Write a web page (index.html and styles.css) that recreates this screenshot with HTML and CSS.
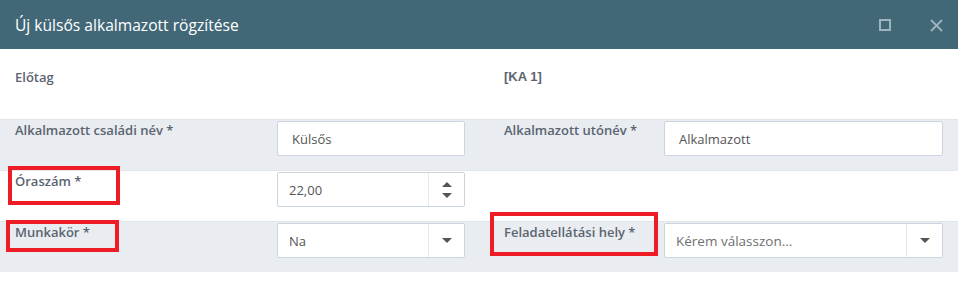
FILE: index.html
```html
<!DOCTYPE html>
<html lang="hu">
<head>
<meta charset="utf-8">
<link rel="stylesheet" href="styles.css">
</head>
<body>
<div class="modal">
  <div class="header">
    <h1 class="title">Új külsős alkalmazott rögzítése</h1>
    <div class="tools">
      <svg class="ico" width="12" height="12" viewBox="0 0 12 12"><rect x="1" y="1" width="10" height="10" fill="none" stroke="#9db3bf" stroke-width="2"/></svg>
      <svg class="ico" width="13" height="13" viewBox="0 0 13 13"><path d="M1 1L12 12M12 1L1 12" stroke="#9db3bf" stroke-width="1.8" fill="none"/></svg>
    </div>
  </div>
  <div class="body">
    <div class="row white">
      <div class="lbl">Előtag</div>
      <div></div>
      <div class="lbl r code">[KA 1]</div>
      <div></div>
    </div>
    <div class="row gray">
      <div class="lbl">Alkalmazott családi név *</div>
      <div class="field text">Külsős</div>
      <div class="lbl r">Alkalmazott utónév *</div>
      <div class="field text right">Alkalmazott</div>
    </div>
    <div class="row white">
      <div class="lbl"><span class="mark m1"></span>Óraszám *</div>
      <div class="field sel"><span class="val">22,00</span><span class="btn"><span class="up"></span><span class="down"></span></span></div>
      <div class="lbl r"></div>
      <div></div>
    </div>
    <div class="row gray">
      <div class="lbl"><span class="mark m2"></span>Munkakör *</div>
      <div class="field sel"><span class="val">Na</span><span class="btn"><span class="down"></span></span></div>
      <div class="lbl r"><span class="mark m3"></span>Feladatellátási hely *</div>
      <div class="field sel right"><span class="val ph">Kérem válasszon...</span><span class="btn"><span class="down"></span></span></div>
    </div>
  </div>
</div>
</body>
</html>
```
FILE: styles.css
```css
* { box-sizing: border-box; }
html, body { margin: 0; padding: 0; background: #fff; }
body { font-family: "Open Sans", "Noto Sans", sans-serif; width: 958px; height: 292px; overflow: hidden; }
.header {
  height: 49px;
  background: #426878;
  display: flex;
  align-items: center;
  justify-content: space-between;
  padding: 0 15px 0 15px;
}
.title { margin: 0; font-size: 15.6px; font-weight: 400; color: #fff; line-height: 22px; padding-top: 1px; }
.tools { display: flex; align-items: center; gap: 39px; padding-top: 1px; }
.ico { display: block; }
.row {
  display: grid;
  grid-template-columns: 277px 188px 199px 279px;
  position: relative;
}
.row .lbl { padding-left: 15px; font-size: 13px; font-weight: 600; color: #5b6470; line-height: 18px; position: relative; }
.row .lbl.r { padding-left: 39px; }
.row:nth-child(1) { height: 70px; }
.row:nth-child(1) .lbl { padding-top: 19px; }
.row .lbl.code { font-family: "Liberation Sans", Arial, sans-serif; font-weight: 700; font-size: 13px; padding-top: 19px; color: #5b6470; }
.gray { background: #e9edf1; border-top: 1px solid #e0e5ea; }
.white { background: #fff; }
.row:nth-child(2) { height: 51px; padding-top: 1px; }
.row:nth-child(3) { height: 51px; border-top: 1px solid #e3e7eb; padding-top: 1px; }
.row:nth-child(4) { height: 51px; padding-top: 1px; }
.row:nth-child(2) .lbl, .row:nth-child(3) .lbl, .row:nth-child(4) .lbl { padding-top: 0; }
.field {
  height: 35px;
  background: #fff;
  border: 1px solid #ccd5df;
  border-radius: 2px;
  font-size: 13px;
  color: #555;
  display: flex;
  align-items: center;
}
.field.text { padding-left: 14px; }
.sel .val { flex: 1; padding-left: 11px; }
.sel .val.ph { color: #6f6f6f; font-size: 13.5px; }
.sel .btn {
  width: 36px;
  height: 100%;
  border-left: 1px solid #e6e9ec;
  display: flex;
  flex-direction: column;
  align-items: center;
  justify-content: center;
  gap: 6px;
}
.up, .down { width: 0; height: 0; border-left: 5px solid transparent; border-right: 5px solid transparent; }
.up { border-bottom: 5px solid #555; }
.down { border-top: 5px solid #555; }
.mark { position: absolute; border: 4px solid #ee1c25; pointer-events: none; }
.m1 { left: 8px; top: -6px; width: 112px; height: 39px; }
.m2 { left: 6px; top: -3px; width: 113px; height: 32px; }
.m3 { left: 25px; top: -11px; width: 168px; height: 44px; }
```
